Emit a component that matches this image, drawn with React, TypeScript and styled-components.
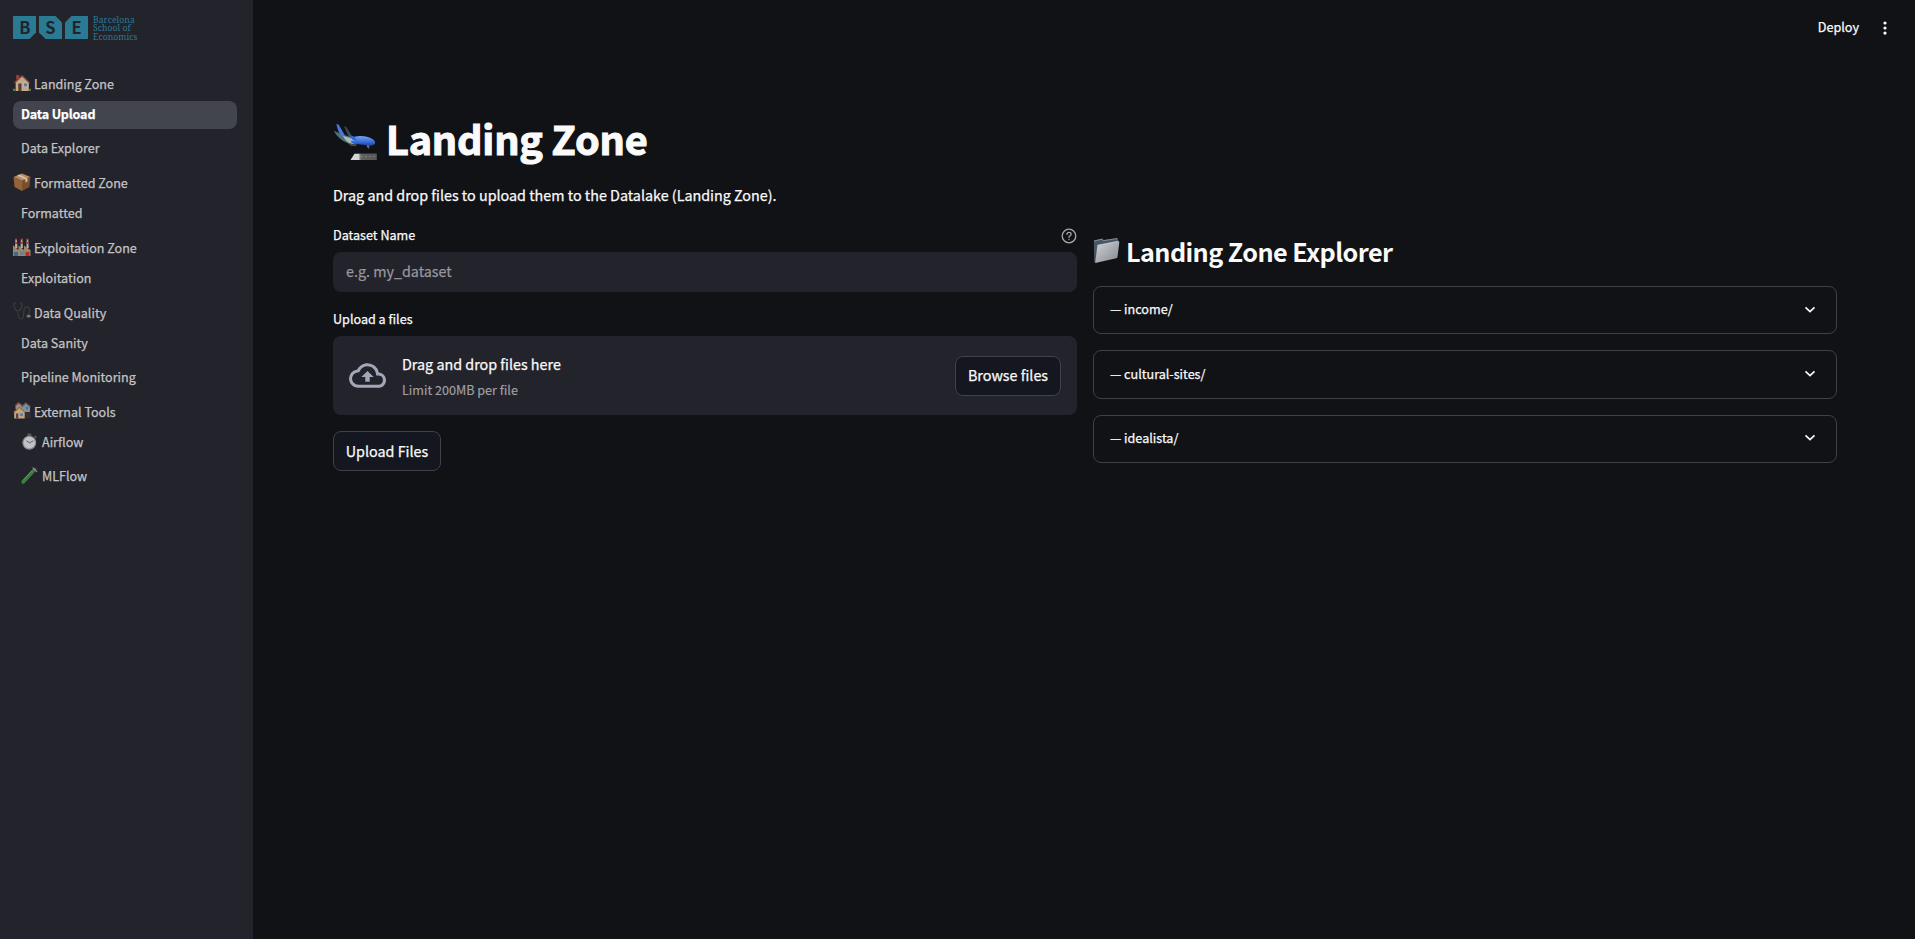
import React from 'react';
import styled, { createGlobalStyle, css } from 'styled-components';

const Global = createGlobalStyle`
  *, *::before, *::after { box-sizing: border-box; }
  html, body { margin: 0; background: #111216; }
  body, button, input {
    font-family: "Source Sans Pro", "Noto Sans CJK SC", "Noto Sans", sans-serif;
    font-weight: 400;
    color: #fafafa;
    -webkit-text-stroke-width: 0.25px;
  }
  h1, h2, p { margin: 0; }
`;

const Page = styled.div`
  display: flex;
  width: 100%;
  height: 939px;
  background: #111216;
  overflow: hidden;
`;

const Sidebar = styled.aside`
  width: 253px;
  flex: none;
  padding: 16px 16px 0 13px;
  background: #23232b;
`;

const Logo = styled.div`
  display: flex;
  align-items: flex-start;
  height: 54px;
  gap: 5px;
  -webkit-text-stroke-width: 0;
`;

const LogoMark = styled.svg`
  display: block;
  width: 75px;
  height: 23px;
`;

const LogoName = styled.div`
  font-family: "Noto Serif", "Liberation Serif", serif;
  font-size: 8.6px;
  line-height: 8.4px;
  letter-spacing: 0.05px;
  color: #2a7a94;
  white-space: nowrap;
`;

const Section = styled.section`
  display: flex;
  flex-direction: column;
`;

const SectionTitle = styled.div`
  display: flex;
  align-items: center;
  gap: 3px;
  height: 28px;
  margin-bottom: 3px;
  font-size: 12.57px;
  line-height: 28px;
  color: #c3c3c6;
  white-space: nowrap;
`;

const NavLink = styled.a<{ $active?: boolean }>`
  display: flex;
  align-items: center;
  gap: 4px;
  height: 28px;
  margin-bottom: 6px;
  padding: 0 8px 2px;
  border-radius: 8px;
  font-size: 12.57px;
  line-height: 26px;
  color: #c3c3c6;
  white-space: nowrap;
  ${(p) =>
    p.$active &&
    css`
      background: #43454e;
      color: #ffffff;
      font-weight: 700;
      letter-spacing: -0.16px;
    `}
`;

const Emoji = styled.svg<{ $size: number; $lift?: number }>`
  display: block;
  flex: none;
  width: ${(p) => p.$size}px;
  height: ${(p) => p.$size}px;
  margin-bottom: ${(p) => p.$lift ?? 0}px;
`;

const Main = styled.main`
  flex: 1;
  min-width: 0;
`;

const Toolbar = styled.header`
  display: flex;
  justify-content: flex-end;
  align-items: center;
  gap: 21px;
  height: 55px;
  padding-right: 25px;
  font-size: 12.6px;
`;

const ToolbarLabel = styled.span`
  padding-bottom: 2px;
`;

const Content = styled.div`
  padding: 50px 78px 0 80px;
`;

const Title = styled.h1`
  display: flex;
  align-items: center;
  gap: 9px;
  height: 66px;
  font-size: 39.6px;
  font-weight: 700;
  line-height: 66px;
  letter-spacing: -0.2px;
  white-space: nowrap;
  -webkit-text-stroke-width: 1.1px;
`;

const Lead = styled.p`
  height: 24px;
  margin-top: 12px;
  font-size: 14.34px;
  line-height: 24px;
`;

const Columns = styled.div`
  display: grid;
  grid-template-columns: 744px 744px;
  gap: 16px;
  margin-top: 16px;
`;

const Column = styled.div`
  min-width: 0;
`;

const LabelRow = styled.div`
  display: flex;
  align-items: center;
  justify-content: space-between;
  height: 24px;
  font-size: 12.6px;
  line-height: 24px;
`;

const TextField = styled.input`
  display: block;
  width: 100%;
  height: 40px;
  margin: 5px 0 15px;
  padding: 0 13px 3px;
  border: 0;
  border-radius: 8px;
  outline: 0;
  background: #23232b;
  font-size: 14.34px;
  &::placeholder {
    color: #96969b;
    opacity: 1;
  }
`;

const Dropzone = styled.div`
  display: flex;
  align-items: center;
  height: 79px;
  margin: 5px 0 16px;
  padding: 0 16px;
  border-radius: 8px;
  background: #23232b;
`;

const DropText = styled.div`
  flex: 1;
  margin-left: 16px;
`;

const DropTitle = styled.div`
  font-size: 14.34px;
  line-height: 24px;
`;

const DropHint = styled.div`
  margin-top: 3px;
  font-size: 12.6px;
  line-height: 21px;
  color: #a0a0a5;
  -webkit-text-stroke-width: 0.15px;
`;

const Button = styled.button<{ $width: number }>`
  width: ${(p) => p.$width}px;
  height: 40px;
  padding: 0 0 1px;
  border: 1px solid #414247;
  border-radius: 8px;
  background: #141720;
  font-size: 14.34px;
  line-height: 24px;
  white-space: nowrap;
`;

const ExplorerTitle = styled.h2`
  display: flex;
  align-items: center;
  gap: 6px;
  height: 34px;
  margin: 11px 0 18px;
  font-size: 25.2px;
  font-weight: 700;
  line-height: 34px;
  letter-spacing: -0.57px;
  white-space: nowrap;
  -webkit-text-stroke-width: 0;
`;

const Expander = styled.div`
  display: flex;
  align-items: center;
  justify-content: space-between;
  height: 48.4px;
  margin-bottom: 16px;
  padding: 0 18px 3px 16px;
  border: 1px solid #3f4045;
  border-radius: 8px;
  font-size: 12.6px;
`;

const House = () => (
  <Emoji $size={18} $lift={2} viewBox="0 0 17 17">
    <path d="M3 1h3v4H3z" fill="#a23b38" />
    <path d="M2.5 7.5 9 2l6 5.5V16H2.5z" fill="#c2a987" />
    <path d="m1.3 8.3 7.3-6.5 7 6.7" fill="none" stroke="#8d4a3c" strokeWidth="1.2" />
    <path d="M5 9h3v7H5z" fill="#593a35" />
    <path d="M10 8.5h3.6V12H10z" fill="#457db5" stroke="#ded1bd" strokeWidth=".5" />
    <path d="M0 14h2.5v2H0zM15 14h2v2h-2z" fill="#5c7843" />
  </Emoji>
);

const Box = () => (
  <Emoji $size={18} $lift={3} viewBox="0 0 18 18">
    <path d="M.5 4 9 .5 17.5 4 9 8z" fill="#b78b61" />
    <path d="M.5 4 9 8v10L1.5 14z" fill="#936238" />
    <path d="M17.5 4 9 8v10l7.5-4z" fill="#7c4f2c" />
    <path d="m4 2.6 8.5 3.8v3l2-1.1V5.4L6.3 1.6z" fill="#d2c2ae" />
  </Emoji>
);

const Factory = () => (
  <Emoji $size={18} $lift={3} viewBox="0 0 18 18">
    <path d="M2.4 1h1.5l.5 9H2zM7.9 1h1.5l.5 9H7.5zM13.7 1h1.5l.5 9h-2.3z" fill="#b9b1ad" />
    <path d="M2.3.5H4v1.7H2.3zM2.2 4h2v2h-2zM7.8.5h1.7v1.7H7.8zM7.7 4h2v2h-2zM13.6.5h1.7v1.7h-1.7zM13.5 4h2v2h-2z" fill="#bd3433" />
    <path d="M0 7.2 5.5 12V7.5L11 12V7.5l6.5 4.7V18H0z" fill="#9b8767" />
    <path d="M1 14h4v4H1z" fill="#416b8c" />
    <path d="M7 13.500h4.500V17H7z" fill="#72808a" />
    <path d="M12.500 14h4v4h-4z" fill="#b72d2c" />
  </Emoji>
);

const Stethoscope = () => (
  <Emoji $size={18} $lift={4} viewBox="0 0 18 18">
    <path
      d="M2.8.8H1C.5 5 2.2 8.500 5 9c3-.5 4.300-4 3.800-8.200H7M5 9c0 5.500 1 8 3 8 3.500 0 2-4 3-9 .5-4 5-4.200 5.700-.5.4 2.500-.700 3.500-1 5.500"
      fill="none"
      stroke="#3b3b42"
      strokeWidth="1.200"
    />
    <ellipse cx="15.600" cy="14.200" rx="2.200" ry="1.600" fill="#55555d" />
    <path d="M14.200 14h3" stroke="#a9a9ad" strokeWidth=".8" />
  </Emoji>
);

const Houses = () => (
  <Emoji $size={18} $lift={3} viewBox="0 0 18 18">
    <path d="M2.500 3.500 5.500.5l4 3V7h-7z" fill="#999087" />
    <path d="m2 4 3.500-3.500 4 3.200" fill="none" stroke="#7f3c38" strokeWidth="1.300" />
    <path d="m9 5 4-3.500L17 5v5H9z" fill="#868f96" />
    <path d="M8.500 5 12.800 1 17.500 5" fill="none" stroke="#5d626c" strokeWidth="1.300" />
    <path d="M9.200 10H18v6.500H9.200z" fill="#302f32" />
    <path d="M1.200 10 6.500 5.500 11.700 10v6.500H1.200z" fill="#c3a581" />
    <path d="m.7 10.400 5.700-5 5.700 5" fill="none" stroke="#96703e" strokeWidth="1.200" />
    <path d="M3 11.500h2.300v5H3z" fill="#61413a" />
    <path d="M7 11.400h3V14H7z" fill="#4e87a7" />
    <path d="M13 5h2v2.500h-2z" fill="#40729a" />
  </Emoji>
);

const Stopwatch = () => (
  <Emoji $size={17} $lift={1} viewBox="0 0 17 17">
    <path d="M6.300 .5h4v3h-4z" fill="#54575e" />
    <path d="m13.500 3 2 1.800" stroke="#4c4f56" strokeWidth="1.800" />
    <circle cx="8.300" cy="9.800" r="7" fill="#878b90" />
    <circle cx="8.300" cy="9.600" r="5.800" fill="#c0c3c6" />
    <path d="m5.500 7.800 3 2 4-2" fill="none" stroke="#515359" strokeWidth=".9" />
  </Emoji>
);

const TestTube = () => (
  <Emoji $size={17} $lift={1} viewBox="0 0 18 18">
    <path d="m2.300 15.800 12.100-13" stroke="#5e6963" strokeWidth="3.800" strokeLinecap="round" />
    <path d="m2.400 15.600 10.100-10.800" stroke="#278a2c" strokeWidth="2.800" strokeLinecap="round" />
    <path d="m2.100 14.200 10-10.600" stroke="#75a977" strokeWidth=".7" />
    <path d="m12.600 .9 4.200 4" stroke="#8d9091" strokeWidth="1.200" strokeLinecap="round" />
  </Emoji>
);

const Plane = () => (
  <Emoji $size={44} $lift={-8} viewBox="0 0 44 44">
    <defs>
      <linearGradient id="hull" x1="0" y1="0" x2="0" y2="1">
        <stop offset="0" stopColor="#78a3ed" />
        <stop offset=".5" stopColor="#4076e4" />
        <stop offset="1" stopColor="#1c3f9d" />
      </linearGradient>
      <linearGradient id="runway">
        <stop offset="0" stopColor="#d5d5d4" />
        <stop offset=".3" stopColor="#d5d5d4" />
        <stop offset=".4" stopColor="#626260" />
        <stop offset="1" stopColor="#565654" />
      </linearGradient>
    </defs>
    <path d="m11 6 2.300 1 6.200 10-3 2z" fill="#3e4650" />
    <path d="m.8 10.700 7 3 13 4.500 1 6-6-.5Q5 19.500.8 10.700z" fill="#4c7176" />
    <path d="m3.300 4 2.200.5 6.500 11-3.500 1Q4.500 11 3.300 4z" fill="#4c76e3" />
    <path d="m10 16 9 2q3-2 8-2 9 .3 13.500 3.700 2.500 2.300 1.300 4.300-1.500 2-5.500 1.800L21 23.500Q14 21.500 10 16z" fill="url(#hull)" />
    <path d="m10 16 8 2.500 4.500 4-3.500 1.500q-6-1.500-9-8z" fill="#a9bbb8" />
    <path d="m16 15 5.500 1.500 2.500 4.500-4-1.500zM18.500 20.500l5.500 2-1 1.500-5-1.500z" fill="#2868dd" />
    <path d="m16.500 23.500 8 1-2 1.700-6-.7z" fill="#454d53" />
    <path d="M34.500 25v2.500m1.200-2.500v3.500" stroke="#696c79" strokeWidth="1.200" />
    <path d="m21.500 33.700 22.300-.2V40H17.500z" fill="url(#runway)" />
    <path d="M28 36.500h15.500" stroke="#81817e" strokeWidth=".8" strokeDasharray="2 2" />
  </Emoji>
);

const Folder = () => (
  <Emoji $size={27} $lift={2} viewBox="0 0 27 27">
    <defs>
      <linearGradient id="folder" x1="0" y1="0" x2="1" y2="1">
        <stop offset="0" stopColor="#cfd2d8" />
        <stop offset="1" stopColor="#84888f" />
      </linearGradient>
    </defs>
    <path d="m.8 3.500 8.600-2 1.200 1.500L25 1v3L3 26l-1.700-1z" fill="#4a5563" />
    <path d="m1 4 8-1.800 1.200 1.500L24 1.600" fill="none" stroke="#98a3b1" strokeWidth=".7" />
    <path d="M4.400 8.200 25 4.300q1.500-.2 1.300 1.200L24.500 20q-.2 1-1.200 1.200L2.200 26.100z" fill="url(#folder)" />
    <path d="M4.500 8.200 25.500 4.200" stroke="#dce0e6" strokeWidth=".6" />
  </Emoji>
);

const HelpIcon = () => (
  <svg width="16" height="18" viewBox="0 -1 16 18" fill="none" stroke="#a8a8ab" strokeWidth="1.300" strokeLinecap="round">
    <circle cx="8" cy="9" r="6.800" />
    <path d="M6 7.300c.1-2.700 4.100-2.600 4.100-.1C10.100 8.700 8 8.700 8 10.300" />
    <path d="M8 12.400v.1" />
  </svg>
);

const CloudIcon = () => (
  <svg width="37" height="37" viewBox="0 0 24 24" fill="#a3a8b8">
    <path d="M19.35 10.04A7.49 7.49 0 0 0 12 4C9.11 4 6.6 5.64 5.35 8.04A5.994 5.994 0 0 0 0 14c0 3.31 2.69 6 6 6h13c2.76 0 5-2.24 5-5 0-2.64-2.05-4.78-4.65-4.96zM19 18H6c-2.21 0-4-1.79-4-4 0-2.05 1.53-3.76 3.56-3.97l1.07-.11.5-.95A5.469 5.469 0 0 1 12 6c2.62 0 4.88 1.86 5.39 4.43l.3 1.5 1.53.11A2.98 2.98 0 0 1 22 15c0 1.65-1.35 3-3 3zM8 13h2.55v3h2.9v-3H16l-4-4z" />
  </svg>
);

const Chevron = () => (
  <svg width="16" height="16" viewBox="0 0 16 16" fill="none" stroke="#fafafa" strokeWidth="1.700">
    <path d="m3.500 6.300 4.500 4.200 4.500-4.200" />
  </svg>
);

const Dots = () => (
  <svg width="10" height="16" viewBox="0 0 10 16" fill="#fafafa">
    <circle cx="5" cy="3" r="1.600" />
    <circle cx="5" cy="8" r="1.600" />
    <circle cx="5" cy="13.100" r="1.600" />
  </svg>
);

const LogoTiles = () => (
  <LogoMark viewBox="0 0 75 23">
    <g fill="#2a7a94">
      <path d="M0 0h23v16.500L16.500 23H0z" />
      <path d="M26 0h16.500L49 6.500V23H32.500L26 16.500z" />
      <path d="M58.500 0H75v23H52V6.500z" />
    </g>
    <g fill="#23232b" fontFamily="Noto Sans CJK SC, sans-serif" fontWeight="700" fontSize="16.5" textAnchor="middle">
      <text x="11.8" y="17.6">B</text>
      <text x="37.5" y="17.6">S</text>
      <text x="63.5" y="17.6">E</text>
    </g>
  </LogoMark>
);

type Item = { label: string; icon?: React.ReactNode; active?: boolean };

const sections: { title: string; icon: React.ReactNode; items: Item[] }[] = [
  { title: 'Landing Zone', icon: <House />, items: [{ label: 'Data Upload', active: true }, { label: 'Data Explorer' }] },
  { title: 'Formatted Zone', icon: <Box />, items: [{ label: 'Formatted' }] },
  { title: 'Exploitation Zone', icon: <Factory />, items: [{ label: 'Exploitation' }] },
  { title: 'Data Quality', icon: <Stethoscope />, items: [{ label: 'Data Sanity' }, { label: 'Pipeline Monitoring' }] },
  {
    title: 'External Tools',
    icon: <Houses />,
    items: [
      { label: 'Airflow', icon: <Stopwatch /> },
      { label: 'MLFlow', icon: <TestTube /> },
    ],
  },
];

const folders = ['income/', 'cultural-sites/', 'idealista/'];

export default function App() {
  return (
    <Page>
      <Global />
      <Sidebar>
        <Logo>
          <LogoTiles />
          <LogoName>
            Barcelona
            <br />
            School of
            <br />
            Economics
          </LogoName>
        </Logo>
        {sections.map((s) => (
          <Section key={s.title}>
            <SectionTitle>
              {s.icon}
              <span>{s.title}</span>
            </SectionTitle>
            {s.items.map((i) => (
              <NavLink key={i.label} $active={i.active}>
                {i.icon}
                <span>{i.label}</span>
              </NavLink>
            ))}
          </Section>
        ))}
      </Sidebar>
      <Main>
        <Toolbar>
          <ToolbarLabel>Deploy</ToolbarLabel>
          <Dots />
        </Toolbar>
        <Content>
          <Title>
            <Plane />
            <span>Landing Zone</span>
          </Title>
          <Lead>Drag and drop files to upload them to the Datalake (Landing Zone).</Lead>
          <Columns>
            <Column>
              <LabelRow>
                <span>Dataset Name</span>
                <HelpIcon />
              </LabelRow>
              <TextField placeholder="e.g. my_dataset" />
              <LabelRow>
                <span>Upload a files</span>
              </LabelRow>
              <Dropzone>
                <CloudIcon />
                <DropText>
                  <DropTitle>Drag and drop files here</DropTitle>
                  <DropHint>Limit 200MB per file</DropHint>
                </DropText>
                <Button $width={106}>Browse files</Button>
              </Dropzone>
              <Button $width={108}>Upload Files</Button>
            </Column>
            <Column>
              <ExplorerTitle>
                <Folder />
                <span>Landing Zone Explorer</span>
              </ExplorerTitle>
              {folders.map((f) => (
                <Expander key={f}>
                  <span>— {f}</span>
                  <Chevron />
                </Expander>
              ))}
            </Column>
          </Columns>
        </Content>
      </Main>
    </Page>
  );
}
